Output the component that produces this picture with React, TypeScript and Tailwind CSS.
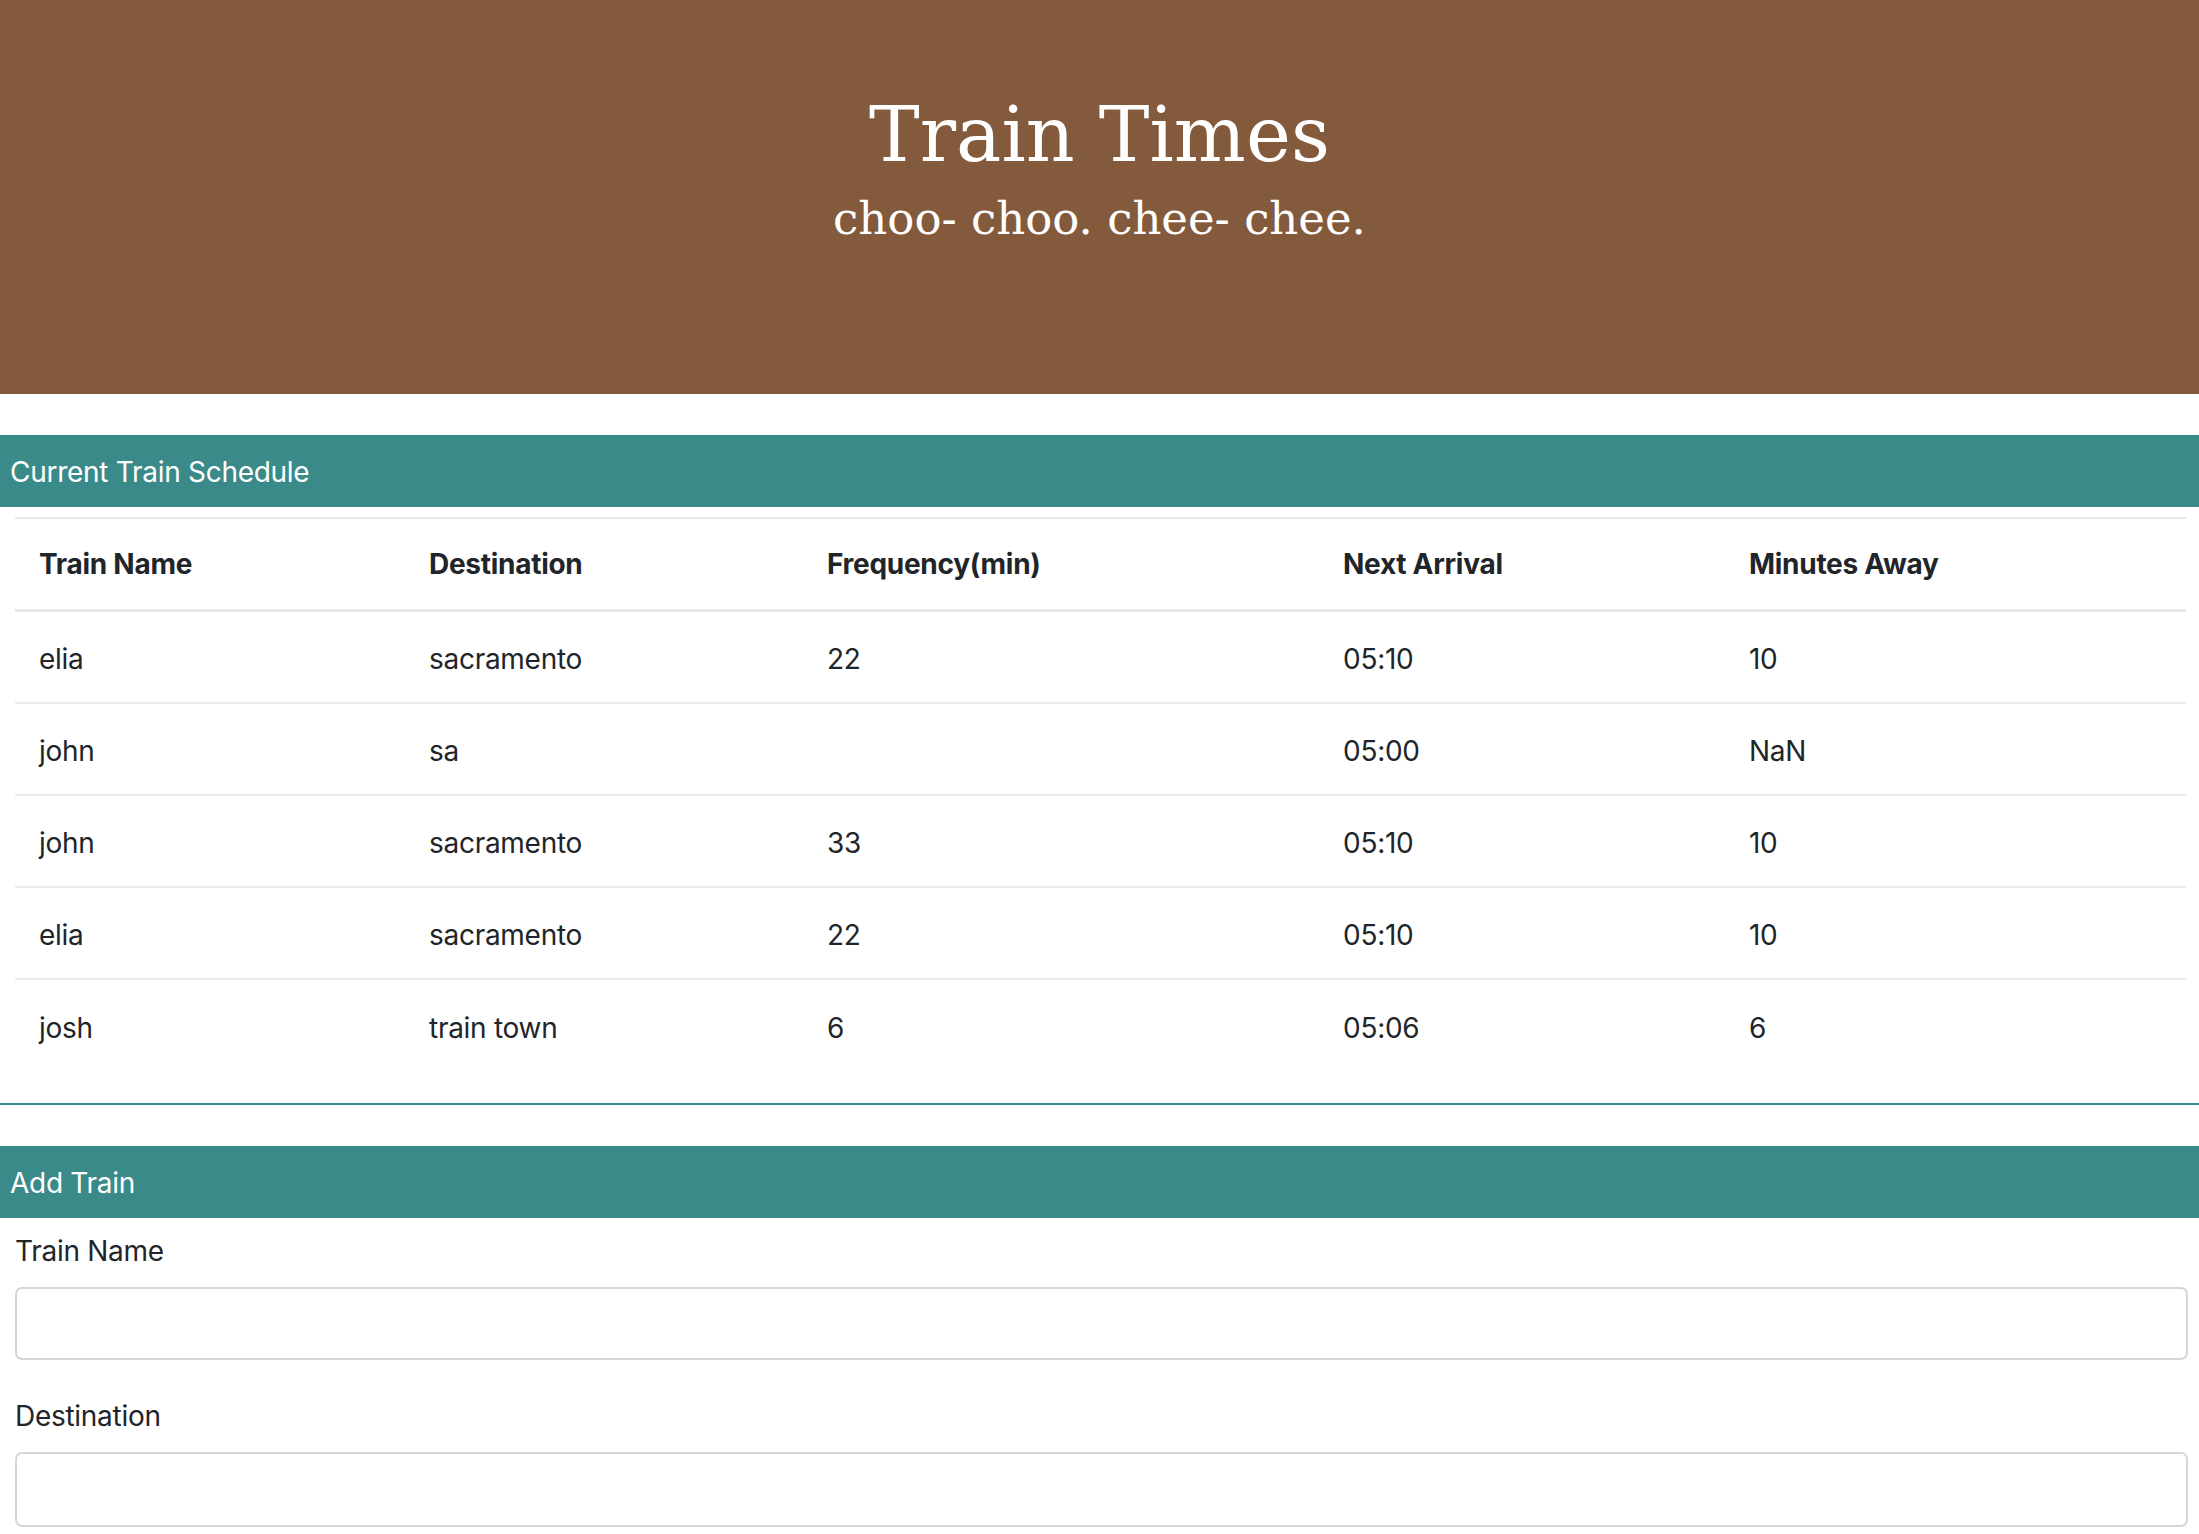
import React from "react";

const rows = [
  ["elia", "sacramento", "22", "05:10", "10"],
  ["john", "sa", "", "05:00", "NaN"],
  ["john", "sacramento", "33", "05:10", "10"],
  ["elia", "sacramento", "22", "05:10", "10"],
  ["josh", "train town", "6", "05:06", "6"],
];

const headers = ["Train Name", "Destination", "Frequency(min)", "Next Arrival", "Minutes Away"];

const gridCols = "grid grid-cols-[390px_398px_516px_406px_1fr]";

export default function App() {
  return (
    <div className="min-h-screen bg-white text-[#212529] font-['Inter','Liberation_Sans',sans-serif]">
      <header className="h-[394px] bg-[#835a3c] flex flex-col items-center text-white font-['DejaVu_Serif','Liberation_Serif',serif]">
        <h1 className="mt-[90px] text-[76px] leading-[90px] font-normal">Train Times</h1>
        <p className="mt-[12px] text-[45px] leading-[54px]">choo- choo. chee- chee.</p>
      </header>

      <section className="mt-[41px] border-b-2 border-[#3a8a89]">
        <div className="h-[72px] bg-[#3a8a89] text-white text-[28px] flex items-center pl-[10px] pt-[2px] tracking-[-0.01em]">
          Current Train Schedule
        </div>
        <div className="ml-[15px] mr-[13px] mt-[10px] pb-[31px] text-[28px] tracking-[-0.01em]">
          <div className={`${gridCols} h-[95px] items-center border-t-2 border-b-[3px] border-[#e6e7e9] font-bold`}>
            {headers.map((h) => (
              <div key={h} className="pl-6">{h}</div>
            ))}
          </div>
          {rows.map((r, i) => (
            <div
              key={i}
              className={`${gridCols} h-[92px] items-center pt-[3px] ${i < rows.length - 1 ? "border-b-2 border-[#ececec]" : ""}`}
            >
              {r.map((c, j) => (
                <div key={j} className="pl-6">{c}</div>
              ))}
            </div>
          ))}
        </div>
      </section>

      <section className="mt-[41px]">
        <div className="h-[72px] bg-[#3a8a89] text-white text-[28px] flex items-center pl-[10px] pt-[2px] tracking-[-0.01em]">
          Add Train
        </div>
        <form className="ml-[15px] mr-[11px] pt-[12px] text-[28px] tracking-[-0.01em]">
          <div className="mb-[35px]">
            <label className="block leading-[42px] mb-[15px]">Train Name</label>
            <input className="block w-full h-[73px] border-2 border-[#d6d6d6] rounded-[7px] px-4 outline-none" />
          </div>
          <div>
            <label className="block leading-[42px] mb-[15px]">Destination</label>
            <input className="block w-full h-[75px] border-2 border-[#d6d6d6] rounded-[7px] px-4 outline-none" />
          </div>
        </form>
      </section>
    </div>
  );
}
